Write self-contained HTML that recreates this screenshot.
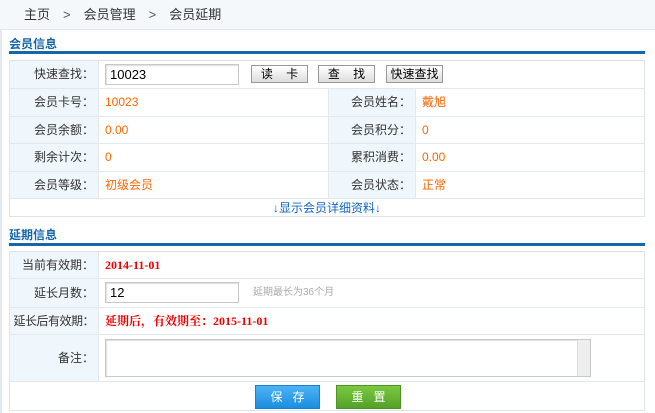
<!DOCTYPE html>
<html><head><meta charset="utf-8"><style>
*{margin:0;padding:0;box-sizing:border-box}
body{width:655px;height:413px;background:#fff;font:12px "Liberation Sans","Noto Sans CJK SC",sans-serif;color:#333;position:relative;overflow:hidden}
.a{position:absolute}
.bc{left:0;top:0;width:655px;height:30px;background:#f4f8fb;border-bottom:1px solid #e2e6ea;line-height:30px;padding-left:24px;font-size:13px;color:#333}
.bc span{margin:0 13px;color:#555}
.tt{left:9px;font-weight:bold;color:#1466a8;font-size:12px}
.ln{left:9px;width:636px;height:3px;background:#1466a8}
.tb{left:9px;width:636px;border:1px solid #dde3e8}
.r{position:absolute;left:0;width:634px;border-bottom:1px solid #e3e8ec;white-space:nowrap}
.l{position:absolute;top:0;bottom:0;background:#f0f7fc;border-right:1px solid #e3e8ec;text-align:right;padding-right:4px;white-space:nowrap}
.v{position:absolute;top:0;color:#f60}
.in{position:absolute;border:1px solid #c8c8c8;box-shadow:inset 1px 1px 1px #ddd;background:#fff;padding-left:4px;font-size:13px;color:#000}
.btn{position:absolute;top:4px;height:18px;border:1px solid #999;background:linear-gradient(#fff,#ddd);text-align:center;line-height:16px;font-size:12px;color:#000}
.red{color:#e00;font-weight:bold;font-family:"Liberation Serif","Noto Serif CJK SC",serif;font-size:12px}
</style></head><body>
<div class="a" style="left:0;top:30px;width:2px;height:383px;background:#e3e8ee"></div>
<div class="a bc">主页<span>&gt;</span>会员管理<span>&gt;</span>会员延期</div>

<div class="a tt" style="top:35px">会员信息</div>
<div class="a ln" style="top:51px"></div>
<div class="a tb" style="top:60px;height:157px">
 <div class="r" style="top:0;height:28px;line-height:27px">
  <div class="l" style="left:0;width:89px">快速查找：</div>
  <div class="in" style="left:95px;top:3px;width:134px;height:21px;line-height:19px">10023</div>
  <div class="btn" style="left:241px;width:57px">读&nbsp;&nbsp;&nbsp;&nbsp;卡</div>
  <div class="btn" style="left:308px;width:57px">查&nbsp;&nbsp;&nbsp;&nbsp;找</div>
  <div class="btn" style="left:376px;width:57px">快速查找</div>
 </div>
 <div class="r" style="top:28px;height:28px;line-height:27px">
  <div class="l" style="left:0;width:89px">会员卡号：</div><div class="v" style="left:95px">10023</div>
  <div class="l" style="left:318px;width:88px;border-left:1px solid #e3e8ec">会员姓名：</div><div class="v" style="left:412px">戴旭</div>
 </div>
 <div class="r" style="top:56px;height:27px;line-height:26px">
  <div class="l" style="left:0;width:89px">会员余额：</div><div class="v" style="left:95px">0.00</div>
  <div class="l" style="left:318px;width:88px;border-left:1px solid #e3e8ec">会员积分：</div><div class="v" style="left:412px">0</div>
 </div>
 <div class="r" style="top:83px;height:28px;line-height:27px">
  <div class="l" style="left:0;width:89px">剩余计次：</div><div class="v" style="left:95px">0</div>
  <div class="l" style="left:318px;width:88px;border-left:1px solid #e3e8ec">累积消费：</div><div class="v" style="left:412px">0.00</div>
 </div>
 <div class="r" style="top:111px;height:27px;line-height:26px">
  <div class="l" style="left:0;width:89px">会员等级：</div><div class="v" style="left:95px">初级会员</div>
  <div class="l" style="left:318px;width:88px;border-left:1px solid #e3e8ec">会员状态：</div><div class="v" style="left:412px">正常</div>
 </div>
 <div class="a" style="top:139px;left:0;width:634px;text-align:center;color:#1466c8;line-height:16px">↓显示会员详细资料↓</div>
</div>

<div class="a tt" style="top:226px">延期信息</div>
<div class="a ln" style="top:243px"></div>
<div class="a tb" style="top:251px;height:160px">
 <div class="r" style="top:0;height:27px;line-height:26px">
  <div class="l" style="left:0;width:89px">当前有效期：</div><div class="v red" style="left:95px">2014-11-01</div>
 </div>
 <div class="r" style="top:27px;height:29px;line-height:28px">
  <div class="l" style="left:0;width:89px">延长月数：</div>
  <div class="in" style="left:95px;top:3px;width:134px;height:21px;line-height:19px">12</div>
  <div class="a" style="left:243px;top:0;color:#aaa;font-size:10px">延期最长为36个月</div>
 </div>
 <div class="r" style="top:56px;height:27px;line-height:26px">
  <div class="l" style="left:0;width:89px;letter-spacing:-0.5px">延长后有效期：</div><div class="v red" style="left:95px">延期后，有效期至：2015-11-01</div>
 </div>
 <div class="r" style="top:83px;height:47px;line-height:46px">
  <div class="l" style="left:0;width:89px">备注：</div>
  <div class="in" style="left:95px;top:4px;width:486px;height:38px"><div class="a" style="right:0;top:0;width:13px;height:36px;background:#eee;border-left:1px solid #ddd"></div></div>
 </div>
 <div class="a" style="left:245px;top:133px;width:65px;height:24px;background:linear-gradient(#4db3f4,#1a8ee0);border:1px solid #1a7fd0;color:#fff;text-align:center;line-height:22px">保&nbsp;&nbsp;&nbsp;存</div>
 <div class="a" style="left:326px;top:133px;width:65px;height:24px;background:linear-gradient(#7ac940,#55a02a);border:1px solid #4d9423;color:#fff;text-align:center;line-height:22px">重&nbsp;&nbsp;&nbsp;置</div>
</div>
</body></html>
